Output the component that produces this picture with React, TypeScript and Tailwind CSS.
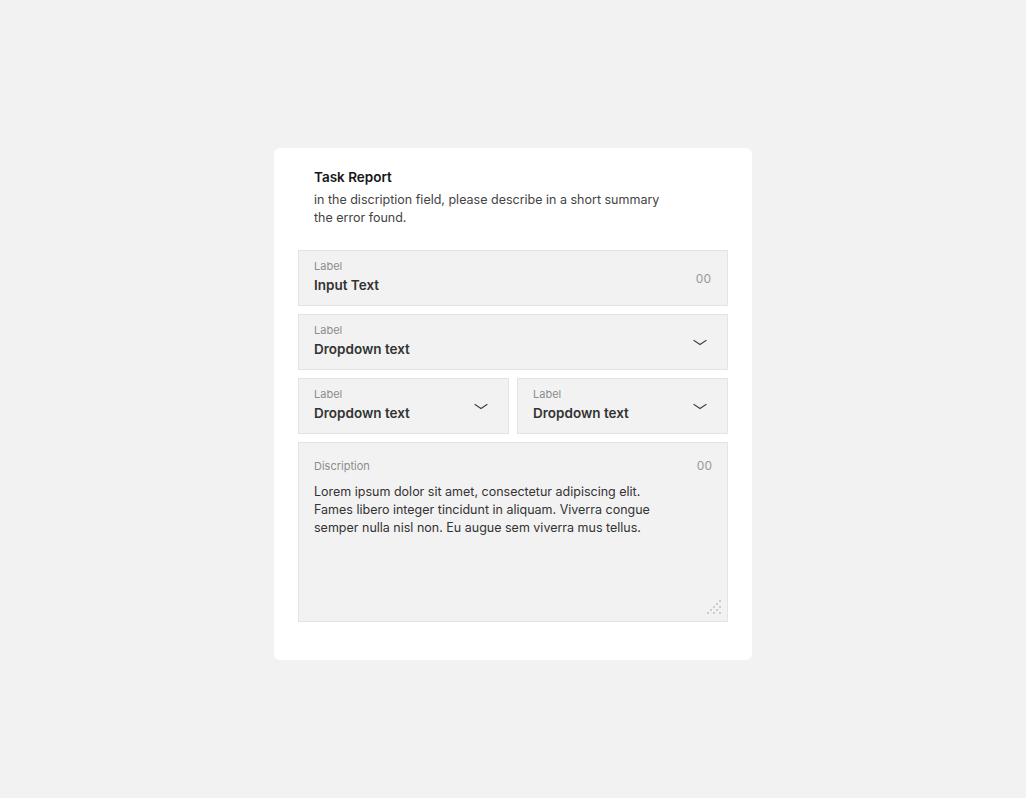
import React from 'react';

const ChevronDown = () => (
  <svg width="14" height="8" viewBox="0 0 14 8" fill="none" className="shrink-0">
    <path d="M1 1.5L7 5.5L13 1.5" stroke="#444" strokeWidth="1.2" strokeLinecap="round" />
  </svg>
);

// diagonal dotted grip in the textarea corner
const ResizeHandle = () => (
  <svg width="14" height="14" viewBox="0 0 14 14" className="absolute right-[6px] bottom-[7px]">
    {[
      [12, 0], [9, 3], [6, 6], [12, 6], [3, 9], [9, 9], [0, 12], [6, 12], [12, 12],
    ].map(([x, y], i) => (
      <rect key={i} x={x} y={y} width="2" height="2" fill="#cccccc" />
    ))}
  </svg>
);

const FieldText = ({ label, value }: { label: string; value: string }) => (
  <div className="flex-1 flex flex-col self-start pt-[8px]">
    <span className="text-[11px] leading-[14px] text-[#8d8d8d]">{label}</span>
    <span className="text-[13.5px] leading-[20px] mt-[2px] font-semibold text-[#333]">{value}</span>
  </div>
);

const InputField = ({ label, value, counter }: { label: string; value: string; counter?: string }) => (
  <div className="h-[56px] bg-[#f2f2f2] border border-[#e3e3e3] flex items-center pl-[15px] pr-[16px]">
    <FieldText label={label} value={value} />
    {counter && <span className="text-[12px] leading-[14px] mt-[2px] text-[#999]">{counter}</span>}
  </div>
);

const DropdownField = ({ label, value }: { label: string; value: string }) => (
  <div className="h-[56px] bg-[#f2f2f2] border border-[#e3e3e3] flex items-center pl-[15px] pr-[20px]">
    <FieldText label={label} value={value} />
    <div className="mt-[2px]">
      <ChevronDown />
    </div>
  </div>
);

export default function App() {
  return (
    <div
      className="min-h-[798px] w-full bg-[#f2f2f2] flex justify-center pt-[148px]"
      style={{ fontFamily: 'Inter, "Noto Sans", sans-serif' }}
    >
      <div className="w-[478px] h-[512px] bg-white rounded-[6px] px-[24px] pt-[19px]">
        {/* Header */}
        <div className="px-[16px]">
          <h2 className="text-[13.5px] leading-[20px] font-semibold text-[#161616]">Task Report</h2>
          <p className="mt-[4px] text-[12.5px] leading-[18px] text-[#444] w-[360px]">
            in the discription field, please describe in a short summary the error found.
          </p>
        </div>

        {/* Fields */}
        <div className="mt-[23px] flex flex-col gap-[8px]">
          <InputField label="Label" value="Input Text" counter="00" />
          <DropdownField label="Label" value="Dropdown text" />
          <div className="grid grid-cols-2 gap-[8px]">
            <DropdownField label="Label" value="Dropdown text" />
            <DropdownField label="Label" value="Dropdown text" />
          </div>
          <div className="relative h-[180px] bg-[#f2f2f2] border border-[#e3e3e3] pl-[15px] pr-[15px] pt-[16px]">
            <div className="flex justify-between">
              <span className="text-[11px] leading-[14px] text-[#8d8d8d]">Discription</span>
              <span className="text-[12px] leading-[14px] text-[#999]">00</span>
            </div>
            <p className="mt-[10px] text-[12.5px] leading-[18px] text-[#333] w-[350px]">
              Lorem ipsum dolor sit amet, consectetur adipiscing elit. Fames libero integer tincidunt in aliquam. Viverra congue semper nulla nisl non. Eu augue sem viverra mus tellus.
            </p>
            <ResizeHandle />
          </div>
        </div>
      </div>
    </div>
  );
}
